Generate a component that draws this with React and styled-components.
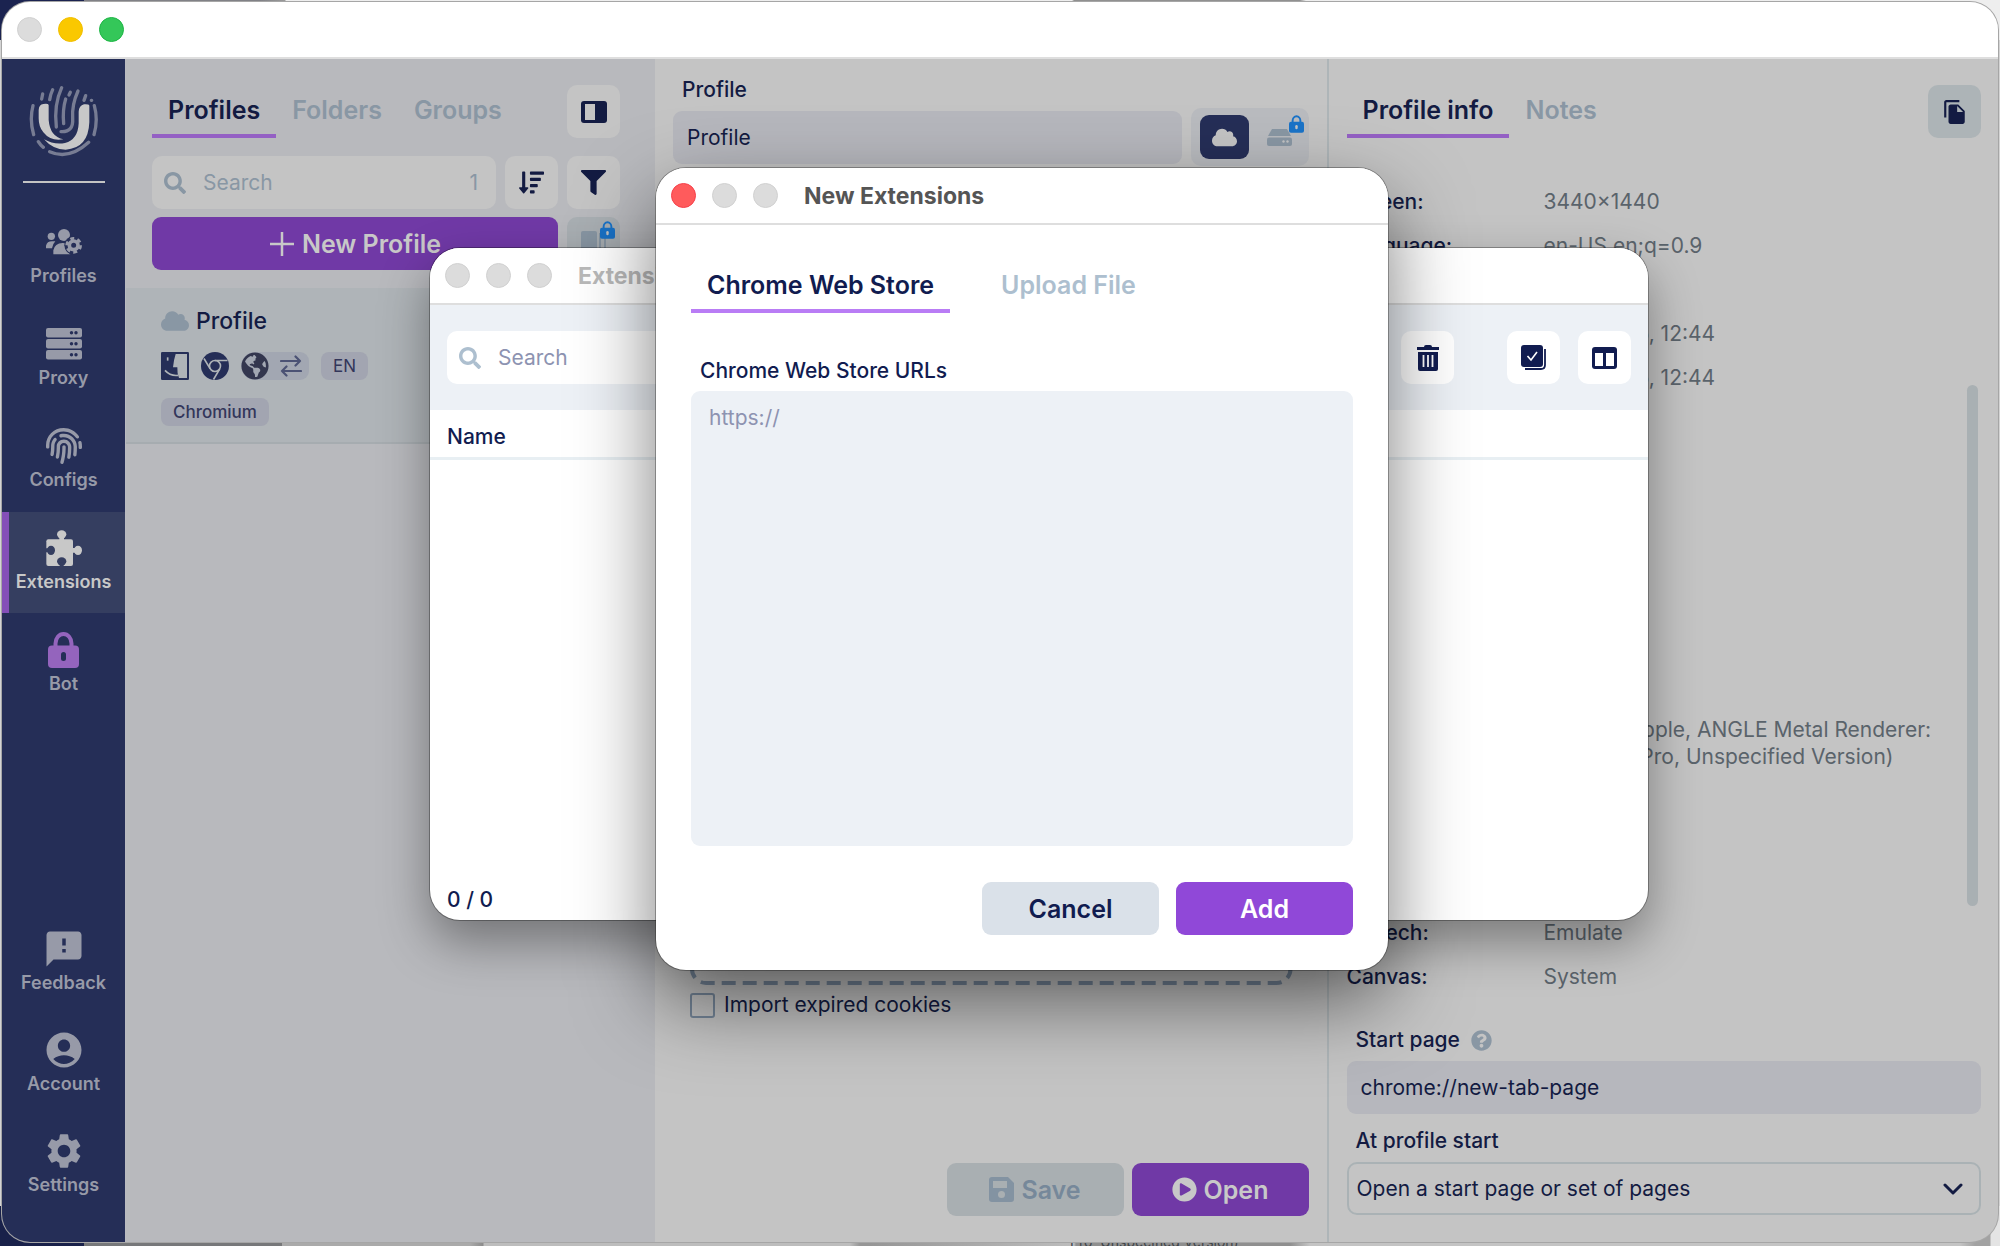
import React from "react";
import styled, { createGlobalStyle, css } from "styled-components";
import { FaFingerprint, FaFilter, FaSearch, FaCloud, FaGlobeAmericas, FaSortAmountDown, FaPlayCircle, FaQuestionCircle } from "react-icons/fa";
import { MdFeedback, MdAccountCircle, MdSettings, MdFileCopy } from "react-icons/md";

const c = {
  navy: "#111c50",
  navyDim: "#131b42",
  side: "#252e57",
  panel: "#b8b9bd",
  page: "#c4c4c4",
  field: "#b6b7bd",
  muted: "#8997a4",
  mutedLight: "#adbfcf",
  mist: "#edf1f6",
  purple: "#9048d8",
  purpleDim: "#7039a6",
};

const Global = createGlobalStyle`
  * { box-sizing: border-box; }
  body { margin: 0; background: #d9d9d9; font-family: Inter, "Liberation Sans", sans-serif; color: ${c.navyDim}; overflow: hidden; }
  button, input, select, textarea { font: inherit; color: inherit; margin: 0; }
  button { border: 0; padding: 0; background: none; }
  svg { display: block; flex: none; }
`;

/* ---------- desktop and windows ---------- */

const Desktop = styled.div`
  position: relative;
  min-height: 100vh;
  padding: 2px 2px 4px;
  display: flex;
  background:
    linear-gradient(90deg, #19214a 84px, #77787a 84px 282px, #aaa 282px 470px, #8c8c8c 483px, #bdbdbd 484px 850px, #969696 860px 870px, #bcbcbc 1074px, #8f8f8f 1076px 1290px, #c4c4c4 1310px 1960px, #a2a2a2 1975px 1990px, #e4e4e4 1991px) bottom / 100% 40px no-repeat,
    linear-gradient(90deg, #1b2350 84px, #808186 84px 260px, #9a9a9a 285px, #eee 286px 1072px, #909090 1074px 1300px, #eee 1306px) top / 100% 40px no-repeat,
    #d4d4d4;
`;

const BehindText = styled.span`
  position: absolute;
  left: 1070px;
  bottom: -6px;
  font-size: 14px;
  line-height: 20px;
  color: #3f4549;
`;

const MainWindow = styled.div`
  position: relative;
  flex: 1;
  display: flex;
  flex-direction: column;
  border-radius: 28px;
  overflow: hidden;
  background: ${c.page};
  box-shadow: 0 0 0 1px #a6a6a6;
`;

const TitleBar = styled.div`
  flex: none;
  height: 57px;
  display: flex;
  align-items: center;
  gap: 16px;
  padding: 0 15px;
  background: #fff;
  border-bottom: 2px solid #dedede;
  font-size: 23px;
  font-weight: 700;
  color: ${(p) => (p.$active ? "#555" : "#b9b9b9")};
`;

const Dot = styled.span`
  width: 25px;
  height: 25px;
  border-radius: 50%;
  background: ${(p) => p.$fill || "#dcdcdc"};
  border: 1px solid ${(p) => p.$edge || "#d0d0d0"};
`;

const WindowTitle = styled.span`
  margin-left: 10px;
`;

const Columns = styled.div`
  flex: 1;
  display: grid;
  grid-template-columns: 124px 529px 1fr 1fr;
`;

const FloatWindow = styled.section`
  position: absolute;
  display: flex;
  flex-direction: column;
  overflow: hidden;
  border-radius: 30px;
  background: #fff;
  color: ${c.navy};
`;

const ExtensionsWindow = styled(FloatWindow)`
  left: 430px;
  top: 248px;
  width: 1218px;
  height: 672px;
  box-shadow: 0 0 0 1px rgba(0, 0, 0, 0.3), 0 22px 50px rgba(0, 0, 0, 0.38);
`;

const NewWindow = styled(FloatWindow)`
  left: 656px;
  top: 168px;
  width: 732px;
  box-shadow: 0 0 0 1px rgba(0, 0, 0, 0.3), 0 32px 80px rgba(0, 0, 0, 0.52);
`;

/* ---------- sidebar ---------- */

const Sidebar = styled.nav`
  display: flex;
  flex-direction: column;
  justify-content: space-between;
  background: ${c.side};
  border-right: 1px solid #b9bac0;
  padding-bottom: 26px;
`;

const Logo = styled.div`
  display: flex;
  justify-content: center;
  padding: 26px 0 24px;
`;

const Rule = styled.hr`
  width: 82px;
  height: 2px;
  margin: 0 auto 23px;
  border: 0;
  background: #c4c4c4;
`;

const NavGroup = styled.div`
  display: flex;
  flex-direction: column;
  gap: ${(p) => p.$gap || 0}px;
`;

const NavItem = styled.button`
  position: relative;
  height: 101px;
  padding: 18px 0 19px;
  display: flex;
  flex-direction: column;
  align-items: center;
  gap: 4px;
  font-size: 18px;
  font-weight: 600;
  line-height: 24px;
  color: #979aa8;
  ${(p) =>
    p.$active &&
    css`
      background: #353e60;
      color: #c8c8c8;
      box-shadow: inset 7px 0 #844fb8;
    `}
`;

const NavIcon = styled.span`
  width: 36px;
  height: 36px;
  display: flex;
  align-items: center;
  justify-content: center;
`;

const Grow = styled.span`
  flex: 1;
`;

/* ---------- shared controls ---------- */

const Tabs = styled.div`
  display: flex;
  align-items: flex-start;
`;

const Tab = styled.button`
  height: 53px;
  padding: 0 16px;
  font-size: 25px;
  font-weight: 600;
  color: ${c.muted};
  border-bottom: 4px solid transparent;
  ${(p) =>
    p.$active &&
    css`
      color: ${c.navyDim};
      border-color: #9460c4;
    `}
`;

const Square = styled.button`
  flex: none;
  width: 53px;
  height: 53px;
  border-radius: 10px;
  display: grid;
  place-items: center;
  position: relative;
  background: ${(p) => p.$bg || c.page};
  color: ${c.navyDim};
`;

const SearchBox = styled.label`
  flex: 1;
  min-width: 0;
  height: 53px;
  display: flex;
  align-items: center;
  gap: 17px;
  padding: 0 18px 0 12px;
  border-radius: 10px;
  font-size: 21px;
  background: ${(p) => (p.$light ? "#fff" : c.page)};
  color: ${(p) => (p.$light ? c.mutedLight : c.muted)};
`;

const SearchInput = styled.input`
  flex: 1;
  min-width: 0;
  border: 0;
  padding: 0;
  background: none;
  outline: 0;
  &::placeholder {
    color: ${(p) => (p.$light ? "#8d93b1" : c.muted)};
    opacity: 1;
  }
`;

const Action = styled.button`
  flex: ${(p) => (p.$grow ? "1" : "0 0 177px")};
  height: 53px;
  display: flex;
  align-items: center;
  justify-content: center;
  gap: 7px;
  border-radius: 9px;
  font-size: 25px;
  font-weight: 600;
  background: ${(p) => p.$bg};
  color: ${(p) => p.$color};
`;

const LockBadge = styled.span`
  position: absolute;
  top: ${(p) => p.$top || 0}px;
  right: ${(p) => p.$right || 0}px;
`;

/* ---------- profiles column ---------- */

const ProfilesPanel = styled.section`
  background: ${c.panel};
  display: flex;
  flex-direction: column;
`;

const PanelHead = styled.div`
  padding: 26px 35px 18px 26px;
  display: flex;
  flex-direction: column;
  gap: 8px;
`;

const TabLine = styled.div`
  display: flex;
  justify-content: space-between;
  padding-bottom: 10px;
`;

const Line = styled.div`
  display: flex;
  gap: 9px;
`;

const ProfileCard = styled.article`
  height: 156px;
  padding: 18px 35px 0;
  background: #afb4b8;
  border-bottom: 2px solid #a6acb0;
`;

const CardTitle = styled.h3`
  margin: 0 0 16px;
  display: flex;
  align-items: center;
  gap: 7px;
  font-size: 23px;
  line-height: 30px;
  font-weight: 500;
  svg { color: ${c.muted}; }
`;

const Badges = styled.div`
  display: flex;
  gap: 12px;
  margin-bottom: 18px;
  color: ${c.side};
`;

const ProxyBadge = styled.span`
  height: 28px;
  width: 68px;
  display: flex;
  align-items: center;
  justify-content: space-between;
  padding-right: 7px;
  border-radius: 14px 9px 9px 14px;
  background: #a2a7b2;
  color: #33364e;
`;

const Chip = styled.span`
  display: inline-flex;
  align-items: center;
  height: 28px;
  padding: 0 12px;
  border-radius: 8px;
  background: #a2a5b1;
  color: #33365a;
  font-size: 17px;
  font-weight: ${(p) => p.$weight || 500};
`;

/* ---------- editor column ---------- */

const Editor = styled.section`
  display: flex;
  flex-direction: column;
  padding: 18px 18px 26px;
`;

const FieldLabel = styled.label`
  display: flex;
  align-items: center;
  gap: 11px;
  padding-left: 9px;
  font-size: 21px;
  font-weight: 500;
  line-height: 26px;
  svg { color: ${c.muted}; }
`;

const NameLine = styled.div`
  display: flex;
  align-items: center;
  gap: 9px;
  margin-top: 5px;
`;

const TextField = styled.input`
  flex: 1;
  min-width: 0;
  width: 100%;
  height: 53px;
  padding: 0 14px;
  border: 0;
  border-radius: 9px;
  background: ${c.field};
  font-size: 21px;
`;

const StorageSwitch = styled.div`
  display: flex;
  width: 118px;
  height: 58px;
  padding: 7px 4px 7px 9px;
  gap: 6px;
  border-radius: 10px;
  background: #b9bbbf;
`;

const StorageOption = styled.button`
  position: relative;
  width: 49px;
  height: 44px;
  border-radius: 9px;
  display: grid;
  place-items: center;
  background: ${(p) => (p.$active ? c.side : "none")};
  color: ${(p) => (p.$active ? "#c4c4c4" : "#8997a4")};
`;

const DropArea = styled.div`
  flex: none;
  height: 805px;
  margin: 12px 18px 9px 19px;
  svg { overflow: visible; }
`;

const CheckLine = styled.label`
  display: flex;
  align-items: center;
  gap: 9px;
  padding-left: 17px;
  font-size: 21px;
  line-height: 26px;
  input {
    appearance: none;
    width: 25px;
    height: 25px;
    border: 2px solid #76879a;
    border-radius: 3px;
  }
`;

const Actions = styled.div`
  display: flex;
  justify-content: flex-end;
  gap: ${(p) => p.$gap || 8}px;
`;

/* ---------- info column ---------- */

const Info = styled.aside`
  display: flex;
  flex-direction: column;
  padding: 26px 17px 27px 18px;
  border-left: 2px solid #aeb5b8;
`;

const Scroller = styled.div`
  flex: 1;
  display: flex;
  justify-content: space-between;
`;

const Facts = styled.dl`
  margin: 0;
  padding-top: 40px;
  display: grid;
  grid-template-columns: 181px 1fr;
  align-content: start;
  gap: 17px 16px;
  font-size: 21px;
  line-height: 27px;
  dt { font-weight: 500; }
  dd { margin: 0; color: #5a636b; white-space: pre-line; }
`;

const Thumb = styled.span`
  width: 11px;
  height: 521px;
  margin: 237px 3px 0 0;
  border-radius: 6px;
  background: #a9b0b3;
`;

const Fields = styled.div`
  display: flex;
  flex-direction: column;
  gap: 8px;
  ${TextField} { flex: none; margin-bottom: 6px; }
`;

const SelectWrap = styled.div`
  display: grid;
  align-items: center;
  > * { grid-area: 1 / 1; }
  svg { justify-self: end; margin-right: 18px; pointer-events: none; }
`;

const Select = styled.select`
  appearance: none;
  width: 100%;
  height: 53px;
  padding: 0 8px;
  border: 2px solid #aab2b5;
  border-radius: 10px;
  background: ${c.page};
  font-size: 21px;
`;

/* ---------- extensions window ---------- */

const Toolbar = styled.div`
  display: flex;
  gap: 18px;
  padding: 26px 17px;
  background: ${c.mist};
  ${Square}:nth-last-child(2) { margin-left: 35px; }
`;

const TableHead = styled.div`
  padding: 12px 17px 5px;
  font-size: 21px;
  line-height: 30px;
  font-weight: 500;
  border-bottom: 3px solid #e8eff3;
`;

const Count = styled.div`
  margin-top: auto;
  padding: 0 17px 5px;
  font-size: 21px;
  line-height: 30px;
  font-weight: 500;
`;

/* ---------- new extensions window ---------- */

const Form = styled.form`
  display: flex;
  flex-direction: column;
  padding: 29px 35px 35px;
`;

const FormTabs = styled(Tabs)`
  gap: 35px;
`;

const FormTab = styled(Tab)`
  height: 59px;
  padding-top: 6px;
  color: ${(p) => (p.$active ? c.navy : c.mutedLight)};
  border-color: ${(p) => (p.$active ? "#b97cf5" : "transparent")};
`;

const FormLabel = styled(FieldLabel)`
  margin: 45px 0 7px;
`;

const UrlArea = styled.textarea`
  height: 455px;
  margin-bottom: 36px;
  padding: 13px 18px;
  border: 0;
  border-radius: 9px;
  resize: none;
  background: ${c.mist};
  font-size: 21px;
  line-height: 27px;
  &::placeholder { color: #8d93b1; opacity: 1; }
`;

/* ---------- drawings ---------- */

const LogoMark = () => (
  <svg width="70" height="72" viewBox="0 0 210 216" fill="none" strokeLinecap="round">
    <g stroke="#777c93" strokeWidth="10">
      <path d="M12 62Q1 105 14 149M196 62Q208 105 195 149" />
      <path d="M28 170Q34 180 43 187M62 200Q120 226 179 172" />
      <path d="M38 42L41 27M62 44Q64 29 71 14M98 8Q74 60 82 126M124 22L120 30M110 42Q100 75 104 116M147 18Q128 60 131 100Q134 142 96 140M170 32L165 46M188 46L187 46" />
    </g>
    <path fill="#c8c8c8" d="M43 57Q58 55 59 60V105Q63 155 103 163Q65 170 43 142Q29 126 29 100V75Q30 59 43 57ZM165 58Q180 57 181 62V112Q178 190 110 194Q72 194 45 163Q75 180 108 174Q147 164 149 115V80Q150 62 165 58Z" />
  </svg>
);

const TeamIcon = () => (
  <svg width="36" height="26" viewBox="0 0 108 78" fill="currentColor">
    <circle cx="16" cy="22" r="11" />
    <circle cx="54" cy="18" r="18" />
    <path d="M0 58V50Q3 37 18 37H28Q20 45 18 58ZM22 76V64Q26 43 50 42Q54 42 57 43Q55 62 73 76Z" />
    <circle cx="83" cy="49" r="28" fill={c.side} />
    <circle cx="83" cy="49" r="13" stroke="currentColor" strokeWidth="11" fill="none" />
    <circle cx="83" cy="49" r="21" stroke="currentColor" strokeWidth="8" fill="none" strokeDasharray="12 10" />
  </svg>
);

const ServerIcon = () => (
  <svg width="36" height="32" viewBox="0 0 36 32" fill="currentColor">
    {[0, 11, 22].map((y) => (
      <g key={y}>
        <rect y={y} width="36" height="9.5" rx="2" />
        <circle cx="25.5" cy={y + 4.8} r="1.7" fill={c.side} />
        <circle cx="30" cy={y + 4.8} r="1.7" fill={c.side} />
      </g>
    ))}
  </svg>
);

const PuzzleIcon = () => (
  <svg width="36" height="36" viewBox="0 0 108 108" fill="#c8c8c8">
    <rect x="1" y="28" width="80" height="80" rx="6" />
    <ellipse cx="47" cy="13" rx="14" ry="12" />
    <path d="M40 20H54V30H40ZM80 54H90V68H80Z" />
    <ellipse cx="96" cy="61" rx="12" ry="14" />
    <g fill="#353e60">
      <ellipse cx="15" cy="61" rx="12" ry="14" />
      <ellipse cx="47" cy="94" rx="14" ry="12" />
      <path d="M0 55H8V67H0ZM41 98H53V108H41Z" />
    </g>
  </svg>
);

const PadlockIcon = ({ width, height, color, hole }) => (
  <svg width={width} height={height} viewBox="0 0 31 36">
    <path d="M7.500 16V11.500a8 9.500 0 0 1 16 0V16" fill="none" stroke={color} strokeWidth="4" />
    <rect y="13.500" width="31" height="22.500" rx="4" fill={color} />
    <rect x="13" y="20" width="5" height="9" rx="2.500" fill={hole} />
  </svg>
);

const SidePanelIcon = () => (
  <svg width="26" height="22" viewBox="0 0 26 22">
    <rect width="26" height="22" rx="3" fill={c.navyDim} />
    <rect x="4" y="3" width="10" height="16" fill={c.page} />
  </svg>
);

const ListsIcon = () => (
  <svg width="26" height="26" viewBox="0 0 26 26">
    <rect width="16" height="26" rx="2" fill="#8997a4" />
    <rect x="18" y="2" width="2" height="24" fill="#8997a4" />
    <rect x="23" y="2" width="2" height="24" fill="#8997a4" />
  </svg>
);

const PlusIcon = () => (
  <svg width="26" height="26" viewBox="0 0 26 26" stroke="currentColor" strokeWidth="2.500">
    <path d="M13 1V25M1 13H25" />
  </svg>
);

const FinderIcon = () => (
  <svg width="28" height="28" viewBox="0 0 84 84">
    <rect width="84" height="84" rx="4" fill={c.side} />
    <path d="M44 6H78V78H54Q48 64 49 46H36Q38 24 44 6Z" fill="#afb4b8" />
    <path d="M12 55Q28 73 52 70" stroke="#afb4b8" strokeWidth="5" fill="none" />
    <path d="M20 16V26" stroke="#afb4b8" strokeWidth="5" />
  </svg>
);

const ChromeIcon = () => (
  <svg width="28" height="28" viewBox="0 0 28 28" fill="none" stroke="#afb4b8" strokeWidth="1.600">
    <circle cx="14" cy="14" r="14" fill={c.side} stroke="none" />
    <circle cx="14" cy="14" r="5.500" />
    <path d="M14 8.500H26.500M9.200 16.800L3 6.500M18.800 16.800L12.500 27.500" />
  </svg>
);

const SwapIcon = () => (
  <svg width="22" height="22" viewBox="0 0 22 22" fill="none" stroke="#4b5274" strokeWidth="2.200" strokeLinecap="round" strokeLinejoin="round">
    <path d="M1 6H20M15.500 1.500L20 6L15.500 10.500M21 16H2M6.500 11.500L2 16L6.500 20.500" />
  </svg>
);

const DriveIcon = () => (
  <svg width="25" height="17" viewBox="0 0 25 17" fill="currentColor">
    <path d="M5 0H20L24 7H1Z" />
    <rect y="8.500" width="25" height="8.500" rx="2" />
    <circle cx="16.500" cy="12.500" r="1.200" fill="#c4c4c4" />
    <circle cx="20.500" cy="12.500" r="1.200" fill="#c4c4c4" />
  </svg>
);

const TrashIcon = () => (
  <svg width="22" height="26" viewBox="0 0 22 26">
    <path d="M0 2H7Q7 0 9 0H13Q15 0 15 2H22V5H0ZM1 7H21V24Q21 26 19 26H3Q1 26 1 24Z" fill={c.navy} />
    <path d="M6.500 10V22M11 10V22M15.500 10V22" stroke="#fff" strokeWidth="1.800" />
  </svg>
);

const SelectAllIcon = () => (
  <svg width="25" height="25" viewBox="0 0 25 25" fill="none">
    <rect width="22" height="22" rx="3" fill={c.navy} />
    <path d="M6.500 11L10 15L16 7" stroke="#fff" strokeWidth="1.600" />
    <path d="M24 4V20Q24 24 20 24H4" stroke={c.navy} strokeWidth="1.800" />
  </svg>
);

const ColumnsIcon = () => (
  <svg width="25" height="22" viewBox="0 0 25 22">
    <rect width="25" height="22" rx="3" fill={c.navy} />
    <path d="M3 6H11V19H3ZM14 6H22V19H14Z" fill="#fff" />
  </svg>
);

const DiskIcon = () => (
  <svg width="25" height="25" viewBox="0 0 25 25">
    <path d="M3 0H19L25 6V22Q25 25 22 25H3Q0 25 0 22V3Q0 0 3 0Z" fill="#8393a2" />
    <rect x="4" y="4" width="14" height="7" fill="#a9afb2" />
    <circle cx="12.500" cy="17.500" r="3.500" fill="#a9afb2" />
  </svg>
);

const ChevronIcon = () => (
  <svg width="20" height="12" viewBox="0 0 20 12" fill="none" stroke={c.navyDim} strokeWidth="3" strokeLinecap="round" strokeLinejoin="round">
    <path d="M2 2L10 10L18 2" />
  </svg>
);

/* ---------- data ---------- */

const navTop = [
  ["Profiles", <TeamIcon />],
  ["Proxy", <ServerIcon />],
  ["Configs", <FaFingerprint size={36} />],
  ["Extensions", <PuzzleIcon />],
  ["Bot", <PadlockIcon width={31} height={36} color="#9464bd" hole={c.side} />],
];

const navBottom = [
  ["Feedback", <MdFeedback size={42} />],
  ["Account", <MdAccountCircle size={42} />],
  ["Settings", <MdSettings size={42} />],
];

const facts = [
  ["Screen:", "3440×1440"],
  ["Language:", "en-US,en;q=0.9"],
  ["Platform:", "macOS"],
  ["Created:", "11.05.2025, 12:44"],
  ["Modified:", "11.05.2025, 12:44"],
  ["Browser:", "Chromium"],
  ["CPU:", "10"],
  ["RAM:", "8"],
  ["Fonts:", "System"],
  ["Media:", "System"],
  ["Audio:", "System"],
  ["WebRTC:", "System"],
  ["WebGL:", "ANGLE (Apple, ANGLE Metal Renderer:\nApple M1 Pro, Unspecified Version)"],
  ["Geo:", "System"],
  ["Ports:", "System"],
  ["Rects:", "System"],
  ["Speech:", "Emulate"],
  ["Canvas:", "System"],
];

const NavList = ({ items }) =>
  items.map(([label, icon]) => (
    <NavItem key={label} $active={label === "Extensions"}>
      <NavIcon>{icon}</NavIcon>
      {label}
    </NavItem>
  ));

export default function App() {
  return (
    <Desktop>
      <Global />
      <BehindText>Pro, Unspecified Version)</BehindText>
      <MainWindow>
        <TitleBar>
          <Dot />
          <Dot $fill="#fac800" $edge="#f0be00" />
          <Dot $fill="#34c759" $edge="#1db544" />
        </TitleBar>
        <Columns>
          <Sidebar>
            <div>
              <Logo><LogoMark /></Logo>
              <Rule />
              <NavGroup $gap={1}><NavList items={navTop} /></NavGroup>
            </div>
            <NavGroup><NavList items={navBottom} /></NavGroup>
          </Sidebar>

          <ProfilesPanel>
            <PanelHead>
              <TabLine>
                <Tabs>
                  <Tab $active>Profiles</Tab>
                  <Tab>Folders</Tab>
                  <Tab>Groups</Tab>
                </Tabs>
                <Square aria-label="Toggle side panel"><SidePanelIcon /></Square>
              </TabLine>
              <Line>
                <SearchBox>
                  <FaSearch size={22} />
                  <SearchInput placeholder="Search" aria-label="Search profiles" />
                  <span>1</span>
                </SearchBox>
                <Square aria-label="Sort"><FaSortAmountDown size={25} /></Square>
                <Square aria-label="Filter"><FaFilter size={25} /></Square>
              </Line>
              <Line>
                <Action $grow $bg={c.purpleDim} $color="#c8c8c8">
                  <PlusIcon />New Profile
                </Action>
                <Square $bg="#a9afb3" aria-label="Profile lists">
                  <ListsIcon />
                  <LockBadge $top={4} $right={5}><PadlockIcon width={15} height={18} color="#1a73c8" hole="#c4c4c4" /></LockBadge>
                </Square>
              </Line>
            </PanelHead>
            <ProfileCard>
              <CardTitle><FaCloud size={28} />Profile</CardTitle>
              <Badges>
                <FinderIcon />
                <ChromeIcon />
                <ProxyBadge><FaGlobeAmericas size={28} /><SwapIcon /></ProxyBadge>
                <Chip $weight={400}>EN</Chip>
              </Badges>
              <Chip>Chromium</Chip>
            </ProfileCard>
          </ProfilesPanel>

          <Editor>
            <FieldLabel htmlFor="name">Profile</FieldLabel>
            <NameLine>
              <TextField id="name" defaultValue="Profile" />
              <StorageSwitch>
                <StorageOption $active aria-label="Cloud storage"><FaCloud size={25} /></StorageOption>
                <StorageOption aria-label="Local storage">
                  <DriveIcon />
                  <LockBadge><PadlockIcon width={15} height={18} color="#1a73c8" hole="#c4c4c4" /></LockBadge>
                </StorageOption>
              </StorageSwitch>
            </NameLine>
            <DropArea>
              <svg width="100%" height="100%">
                <rect x="0" y="0" width="100%" height="100%" rx="14" fill="none" stroke="#76879a" strokeWidth="4" strokeDasharray="14 7" />
              </svg>
            </DropArea>
            <CheckLine><input type="checkbox" />Import expired cookies</CheckLine>
            <Grow />
            <Actions>
              <Action $bg="#a9afb2" $color="#76889a"><DiskIcon />Save</Action>
              <Action $bg={c.purpleDim} $color="#c8c8c8"><FaPlayCircle size={25} />Open</Action>
            </Actions>
          </Editor>

          <Info>
            <TabLine>
              <Tabs>
                <Tab $active>Profile info</Tab>
                <Tab>Notes</Tab>
              </Tabs>
              <Square $bg="#adb4b7" aria-label="Copy"><MdFileCopy size={26} /></Square>
            </TabLine>
            <Scroller>
              <Facts>
                {facts.map(([k, v]) => (
                  <React.Fragment key={k}>
                    <dt>{k}</dt>
                    <dd>{v}</dd>
                  </React.Fragment>
                ))}
              </Facts>
              <Thumb />
            </Scroller>
            <Fields>
              <FieldLabel htmlFor="start">Start page<FaQuestionCircle size={21} /></FieldLabel>
              <TextField id="start" defaultValue="chrome://new-tab-page" />
              <FieldLabel htmlFor="mode">At profile start</FieldLabel>
              <SelectWrap>
                <Select id="mode"><option>Open a start page or set of pages</option></Select>
                <ChevronIcon />
              </SelectWrap>
            </Fields>
          </Info>
        </Columns>
      </MainWindow>

      <ExtensionsWindow>
        <TitleBar>
          <Dot /><Dot /><Dot />
          <WindowTitle>Extensions</WindowTitle>
        </TitleBar>
        <Toolbar>
          <SearchBox $light>
            <FaSearch size={22} />
            <SearchInput $light placeholder="Search" aria-label="Search extensions" />
          </SearchBox>
          <Square $bg="#fff" aria-label="Delete"><TrashIcon /></Square>
          <Square $bg="#fff" aria-label="Select all"><SelectAllIcon /></Square>
          <Square $bg="#fff" aria-label="Columns"><ColumnsIcon /></Square>
        </Toolbar>
        <TableHead>Name</TableHead>
        <Count>0 / 0</Count>
      </ExtensionsWindow>

      <NewWindow>
        <TitleBar $active>
          <Dot $fill="#ff5b5c" $edge="#f5404a" /><Dot /><Dot />
          <WindowTitle>New Extensions</WindowTitle>
        </TitleBar>
        <Form onSubmit={(e) => e.preventDefault()}>
          <FormTabs>
            <FormTab type="button" $active>Chrome Web Store</FormTab>
            <FormTab type="button">Upload File</FormTab>
          </FormTabs>
          <FormLabel htmlFor="urls">Chrome Web Store URLs</FormLabel>
          <UrlArea id="urls" placeholder="https://" />
          <Actions $gap={17}>
            <Action type="button" $bg="#dae1e9" $color={c.navy}>Cancel</Action>
            <Action $bg={c.purple} $color="#fff">Add</Action>
          </Actions>
        </Form>
      </NewWindow>
    </Desktop>
  );
}
